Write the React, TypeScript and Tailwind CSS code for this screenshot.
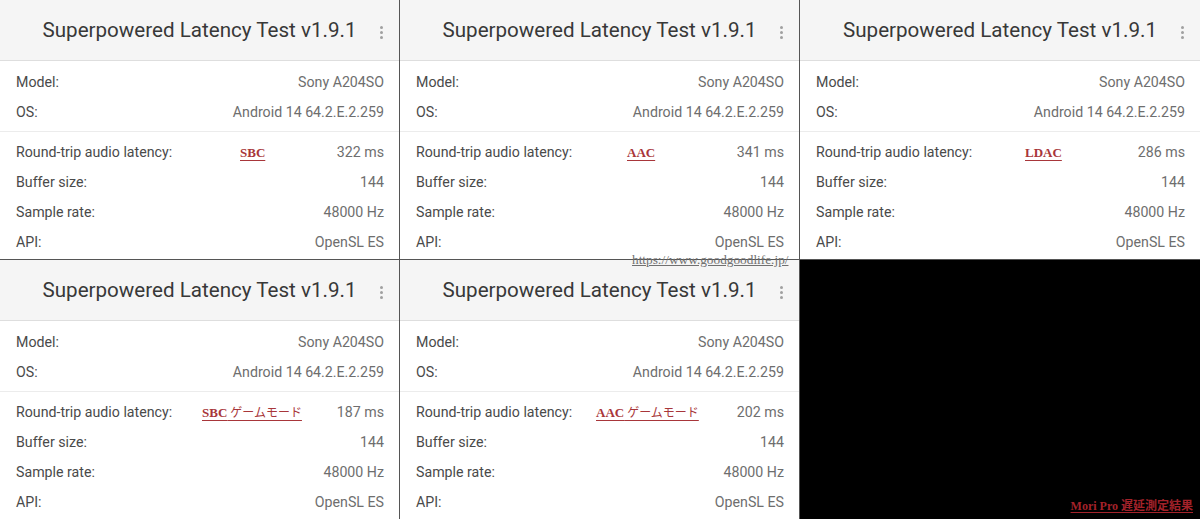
import React from "react";

type PanelProps = {
  latency: string;
  codec: string;
  jp?: boolean;
  codecLeft: string;
  className?: string;
};

const roboto = { fontFamily: "Roboto, 'Noto Sans', sans-serif" };
const serif = { fontFamily: "'Liberation Serif', 'Noto Sans CJK JP', serif" };

function Row({ label, value, children }: { label: string; value: string; children?: React.ReactNode }) {
  return (
    <div className="relative flex h-[30px] items-center justify-between text-[14.2px]">
      <span className="text-[#4a4a4a]">{label}</span>
      {children}
      <span className="text-[#6e6e6e]">{value}</span>
    </div>
  );
}

function Panel({ latency, codec, jp, codecLeft, className }: PanelProps) {
  return (
    <div className={"relative h-[260px] overflow-hidden bg-white " + (className ?? "")} style={roboto}>
      <div className="relative flex h-[61px] items-center justify-center border-b border-[#dedede] bg-[#f5f5f5]">
        <span className="text-[20.6px] text-[#383838]">Superpowered Latency Test v1.9.1</span>
        <div className="absolute right-[16px] top-[26px] flex flex-col items-center gap-[2px]">
          <span className="block h-[3px] w-[3px] rounded-full bg-[#a0a0a0]" />
          <span className="block h-[3px] w-[3px] rounded-full bg-[#a0a0a0]" />
          <span className="block h-[3px] w-[3px] rounded-full bg-[#a0a0a0]" />
        </div>
      </div>
      <div className="pl-[16px] pr-[15px] pt-[7px]">
        <Row label="Model:" value="Sony A204SO" />
        <Row label="OS:" value="Android 14 64.2.E.2.259" />
      </div>
      <div className="mt-[3px] border-t border-[#ececec]" />
      <div className="pl-[16px] pr-[15px] pt-[6px]">
        <Row label="Round-trip audio latency:" value={latency}>
          <span
            className={"absolute top-[5px] text-[13px] text-[#a8363a] underline underline-offset-[3px] " + codecLeft}
            style={serif}
          >
            <span className="font-bold">{codec}</span>
            {jp ? <span className="font-normal text-[12px]"> ゲームモード</span> : null}
          </span>
        </Row>
        <Row label="Buffer size:" value="144" />
        <Row label="Sample rate:" value="48000 Hz" />
        <Row label="API:" value="OpenSL ES" />
      </div>
    </div>
  );
}

export default function App() {
  return (
    <div className="relative h-[519px] w-[1200px] overflow-hidden bg-white">
      <div className="grid grid-cols-[400px_400px_400px] grid-rows-[260px_259px]">
        <Panel latency="322 ms" codec="SBC" codecLeft="left-[224px]" className="border-r border-b border-[#555]" />
        <Panel latency="341 ms" codec="AAC" codecLeft="left-[211px]" className="border-r border-b border-[#555]" />
        <Panel latency="286 ms" codec="LDAC" codecLeft="left-[209px]" className="border-b border-[#555]" />
        <Panel latency="187 ms" codec="SBC" jp codecLeft="left-[186px]" className="border-r border-[#555]" />
        <Panel latency="202 ms" codec="AAC" jp codecLeft="left-[180px]" className="border-r border-[#555]" />
        <div className="relative h-[259px] bg-black">
          <span
            className="absolute bottom-[4px] right-[7px] text-[12px] font-bold text-[#a3222a] underline underline-offset-[2px]"
            style={serif}
          >
            Mori Pro 遅延測定結果
          </span>
        </div>
      </div>
      <span
        className="absolute left-[632px] top-[250px] text-[13.3px] text-[#707070] underline"
        style={{ fontFamily: "'Liberation Serif', serif" }}
      >
        https://www.goodgoodlife.jp/
      </span>
    </div>
  );
}
